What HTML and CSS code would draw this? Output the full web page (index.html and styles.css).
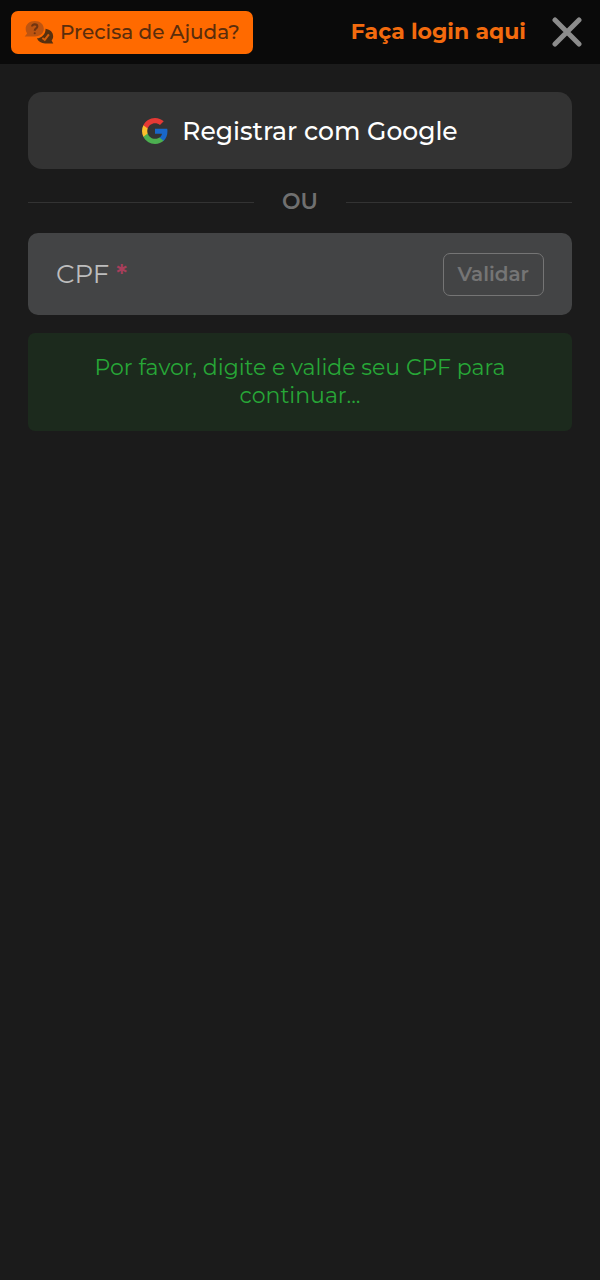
FILE: index.html
```html
<!DOCTYPE html>
<html lang="pt-BR">
<head>
  <meta charset="UTF-8" />
  <meta name="viewport" content="width=device-width, initial-scale=1.0"/>
  <title>Cadastro</title>
  <link rel="stylesheet" href="styles.css">
</head>
<body>

  <header class="topbar">
    <button type="button" class="help-btn">
      <svg class="help-icon" viewBox="0 0 28 24" aria-hidden="true">
        <path class="bubble-back" d="M10 1C4.800 1 1.200 4.300 1.200 8.500c0 1.700.5 3.200 1.400 4.400L.3 15.800h9.700c5 0 8.600-3 8.600-7.300S15 1 10 1z"/>
        <path class="bubble-mark" d="M7.400 6.200c0-2.800 5-2.600 5 .1 0 1.900-2.500 1.700-2.500 3.900"/>
        <circle class="bubble-dot" cx="9.900" cy="12.700" r="1"/>
        <path class="bubble-front" d="M20.300 8.300c.1 5.600-4 8.900-8.300 9.300 1.300 3.300 4.200 4.900 7.900 4.900h7.800l-1.600-2.900c1-1.200 1.500-2.600 1.500-4.100 0-3.600-2.700-6.500-7.300-7.200z"/>
        <path class="bubble-check" d="M17.200 17.300l2.300 1.700 4-5.200"/>
      </svg>
      Precisa de Ajuda?
    </button>
    <a href="#login" class="login-link">Faça login aqui</a>
    <button type="button" class="close-btn" aria-label="Fechar">
      <svg viewBox="0 0 30 30" aria-hidden="true">
        <path d="M3 3l24 24M27 3L3 27"/>
      </svg>
    </button>
  </header>

  <main class="register">
    <button type="button" class="google-btn">
      <svg class="google-icon" viewBox="0 0 48 48" aria-hidden="true">
        <path fill="#1967c9" d="M47 24.500c0-1.600-.2-3.200-.4-4.700H24v9.300h12.900c-.6 3-2.300 5.500-4.800 7.200v6h7.700C44.400 38.100 47 32 47 24.500z"/>
        <path fill="#4caf50" d="M24 48c6.500 0 11.900-2.100 15.900-5.800l-7.700-6c-2.200 1.500-4.900 2.300-8.200 2.300-6.300 0-11.600-4.200-13.500-9.900h-8v6.200C6.500 42.600 14.600 48 24 48z"/>
        <path fill="#fbc02d" d="M10.500 28.600c-.5-1.500-.8-3-.8-4.600s.3-3.200.8-4.600v-6.200h-8C.9 16.500 0 20.100 0 24s.9 7.500 2.500 10.800l8-6.200z"/>
        <path fill="#e53935" d="M24 9.500c3.500 0 6.700 1.200 9.200 3.600l6.900-6.900C35.900 2.400 30.500 0 24 0 14.600 0 6.500 5.400 2.500 13.200l8 6.200C12.400 13.700 17.700 9.500 24 9.500z"/>
      </svg>
      Registrar com Google
    </button>

    <div class="divider">OU</div>

    <form id="cpf-form">
      <div class="cpf-field">
        <label for="cpf">CPF <span class="required">*</span></label>
        <input type="text" name="cpf" id="cpf" inputmode="numeric" required />
        <button type="submit" class="validate-btn" disabled>Validar</button>
      </div>
      <p class="notice">Por favor, digite e valide seu CPF para continuar...</p>
    </form>
  </main>

</body>
</html>
```
FILE: styles.css
```css
* {
  box-sizing: border-box;
}
body {
  margin: 0;
  background: #1b1b1b;
  font-family: Montserrat, Inter, sans-serif;
  font-size: 22px;
  line-height: 28px;
}
button, input {
  font-family: inherit;
}
button {
  cursor: pointer;
}
.topbar {
  display: flex;
  align-items: center;
  height: 64px;
  padding: 0 18px 0 11px;
  background: #0a0a0a;
}
.help-btn {
  display: flex;
  align-items: center;
  gap: 6px;
  height: 43px;
  padding: 0 13px;
  border: none;
  border-radius: 7px;
  background: #ff6a00;
  color: #5a2d0c;
  font-size: 20px;
  font-weight: 500;
  line-height: 28px;
}
.help-icon {
  width: 30px;
  height: 25px;
}
.bubble-back {
  fill: #bd5410;
}
.bubble-mark {
  fill: none;
  stroke: #713410;
  stroke-width: 2;
}
.bubble-dot {
  fill: #713410;
}
.bubble-front {
  fill: #56300f;
}
.bubble-check {
  fill: none;
  stroke: #d45d08;
  stroke-width: 2;
}
.login-link {
  margin-left: auto;
  color: #f36b0e;
  font-weight: 700;
  text-decoration: none;
}
.close-btn {
  width: 30px;
  height: 30px;
  margin-left: 26px;
  padding: 0;
  border: none;
  background: none;
}
.close-btn svg {
  display: block;
  stroke: #8c8c8c;
  stroke-width: 5;
  stroke-linecap: round;
}
.register {
  padding: 28px;
}
.google-btn {
  display: flex;
  align-items: center;
  justify-content: center;
  gap: 14px;
  width: 100%;
  height: 77px;
  border: none;
  border-radius: 14px;
  background: #333;
  color: #fff;
  font-size: 25px;
  font-weight: 500;
}
.google-icon {
  width: 26px;
  height: 26px;
}
.divider {
  display: flex;
  align-items: center;
  gap: 28px;
  margin: 19px 0 17px;
  color: #707070;
  font-weight: 600;
}
.divider::before,
.divider::after {
  content: "";
  flex: 1;
  height: 1px;
  background: #333;
}
.cpf-field {
  display: flex;
  align-items: center;
  height: 82px;
  padding: 0 28px;
  border-radius: 10px;
  background: #434445;
}
.cpf-field label {
  color: #bdbdbd;
  font-size: 26px;
  line-height: 32px;
}
.required {
  color: #a83e5b;
  font-weight: 600;
}
.cpf-field input {
  flex: 1;
  min-width: 0;
  height: 42px;
  border: none;
  outline: none;
  background: none;
  color: #fff;
  font-size: 26px;
}
.validate-btn {
  height: 43px;
  padding: 0 14px;
  border: 1px solid #757575;
  border-radius: 7px;
  background: none;
  color: #757575;
  font-size: 20px;
  font-weight: 600;
}
.notice {
  margin: 18px 0 0;
  padding: 21px 56px;
  border-radius: 7px;
  background: #1c2a1d;
  color: #27a737;
  text-align: center;
}
```
